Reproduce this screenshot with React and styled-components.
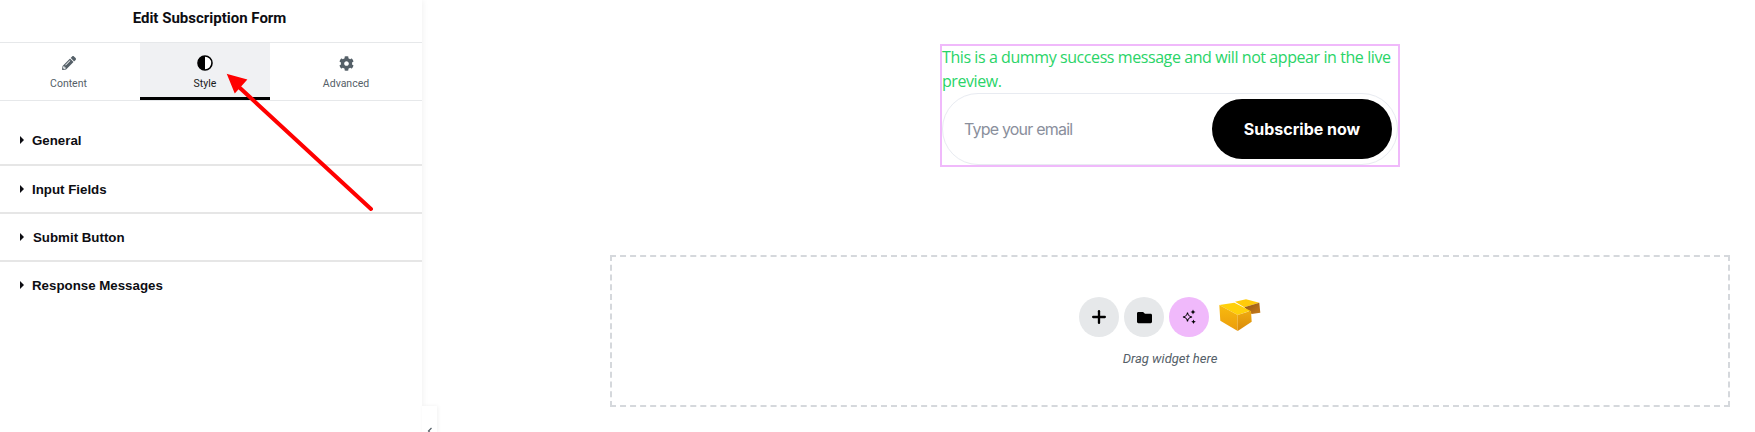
import React from "react"
import styled, { createGlobalStyle } from "styled-components"
import { FaPencilAlt, FaCog, FaFolder } from "react-icons/fa"
import { Plus } from "lucide-react"

const GlobalStyle = createGlobalStyle`
  html, body {
    margin: 0;
    padding: 0;
    background: #fff;
    overflow: hidden;
  }
  * {
    box-sizing: border-box;
  }
`

const sections = [
  { label: "General", height: 65, top: 32 },
  { label: "Input Fields", height: 48 },
  { label: "Submit Button", height: 48, gap: 9 },
  { label: "Response Messages", height: 48, last: true },
]

const ContrastIcon = () => (
  <svg width="16" height="16" viewBox="0 0 16 16">
    <circle cx="8" cy="8" r="7" fill="#fff" stroke="#000" strokeWidth="1.6" />
    <path d="M8 1 A7 7 0 0 0 8 15 Z" fill="#000" />
  </svg>
)

const Sparkles = () => (
  <svg width="16" height="16" viewBox="0 0 16 16" fill="none">
    <path
      d="M6.5 3.5 C7 6.5 7.8 7.4 11 8 C7.8 8.6 7 9.5 6.5 12.5 C6 9.5 5.2 8.6 2 8 C5.2 7.4 6 6.5 6.5 3.5 Z"
      stroke="#000"
      strokeWidth="1.1"
    />
    <path d="M12 0.5 L12.8 2.2 L14.5 3 L12.8 3.8 L12 5.5 L11.2 3.8 L9.5 3 L11.2 2.2 Z" fill="#000" />
    <path d="M12.5 10.5 L13.2 12.1 L14.8 12.8 L13.2 13.5 L12.5 15.1 L11.8 13.5 L10.2 12.8 L11.8 12.1 Z" fill="#000" />
  </svg>
)

const BlocksLogo = () => (
  <svg width="42" height="34" viewBox="0 0 42 34">
    <defs>
      <linearGradient id="blockFront" x1="0" y1="0" x2="0" y2="1">
        <stop offset="0" stopColor="#f8bb0e" />
        <stop offset="1" stopColor="#eb9c0c" />
      </linearGradient>
      <linearGradient id="blockSide" x1="0" y1="0" x2="0" y2="1">
        <stop offset="0" stopColor="#efab10" />
        <stop offset="1" stopColor="#d98a0b" />
      </linearGradient>
      <linearGradient id="blockBrown" x1="0" y1="0" x2="1" y2="1">
        <stop offset="0" stopColor="#8f5514" />
        <stop offset="1" stopColor="#c97c1a" />
      </linearGradient>
    </defs>
    <path d="M16 3.7 L27 1.3 L40.3 4.7 L25.3 9.3 Z" fill="#ffcb0a" />
    <path d="M25.3 9.3 L40.3 4.7 L41.3 14.7 L32.7 16 Z" fill="url(#blockBrown)" />
    <path d="M0.3 7 L15.3 4.7 L31.3 12.7 L18.7 17 Z" fill="#ffd00a" />
    <path d="M0.3 7 L18.7 17 L18.7 33 L1.3 22.7 Z" fill="url(#blockFront)" />
    <path d="M18.7 17 L32 12.7 L32.7 23.7 L18.7 33 Z" fill="url(#blockSide)" />
  </svg>
)

const App = () => {
  return (
    <Page>
      <GlobalStyle />
      <Sidebar>
        <Title>Edit Subscription Form</Title>
        <Tabs>
          <Tab $width={140} $shift={3}>
            <TabIcon>
              <FaPencilAlt size={14} color="#556068" />
            </TabIcon>
            <TabLabel>Content</TabLabel>
          </Tab>
          <Tab $width={130} $active>
            <TabIcon>
              <ContrastIcon />
            </TabIcon>
            <TabLabel $active>Style</TabLabel>
          </Tab>
          <Tab $width={152}>
            <TabIcon>
              <FaCog size={15} color="#556068" />
            </TabIcon>
            <TabLabel>Advanced</TabLabel>
          </Tab>
        </Tabs>
        {sections.map((section) => (
          <Section
            key={section.label}
            $height={section.height}
            $top={section.top}
            $gap={section.gap}
            $last={section.last}
          >
            <Caret />
            <SectionName>{section.label}</SectionName>
          </Section>
        ))}
      </Sidebar>
      <CollapseTab>
        <svg width="6" height="8" viewBox="0 0 6 8" fill="none">
          <path d="M4.5 1 L1.5 4 L4.5 7" stroke="#556068" strokeWidth="1.2" />
        </svg>
      </CollapseTab>
      <Canvas>
        <FormBox>
          <Success>This is a dummy success message and will not appear in the live preview.</Success>
          <SubscribeRow>
            <EmailPlaceholder>Type your email</EmailPlaceholder>
            <SubscribeButton>Subscribe now</SubscribeButton>
          </SubscribeRow>
        </FormBox>
        <DropZone>
          <DropActions>
            <RoundButton>
              <Plus size={20} strokeWidth={2.8} color="#000" />
            </RoundButton>
            <RoundButton>
              <FaFolder size={15} color="#000" />
            </RoundButton>
            <RoundButton $pink>
              <Sparkles />
            </RoundButton>
            <LogoSlot>
              <BlocksLogo />
            </LogoSlot>
          </DropActions>
          <DropHint>Drag widget here</DropHint>
        </DropZone>
      </Canvas>
      <ArrowOverlay width="422" height="220" viewBox="0 0 422 220">
        <path d="M371 209 L240 88" stroke="#ff0000" strokeWidth="4" strokeLinecap="round" />
        <path d="M228 75 L246 80 L235 92 Z" fill="#ff0000" stroke="#ff0000" strokeWidth="1.5" />
      </ArrowOverlay>
    </Page>
  )
}

const Page = styled.div`
  position: relative;
  display: flex;
  width: 1755px;
  height: 432px;
  overflow: hidden;
  background: #fff;
`

const Sidebar = styled.aside`
  flex: 0 0 422px;
  height: 432px;
  background: #fff;
  box-shadow: 1px 0 6px rgba(0, 0, 0, 0.06);
  font-family: "Liberation Sans", Arial, sans-serif;
`

const Title = styled.h1`
  margin: 0;
  height: 43px;
  padding: 8px 3px 0 0;
  text-align: center;
  font-family: Roboto, sans-serif;
  font-size: 15px;
  line-height: 20px;
  font-weight: 700;
  color: #0d0d12;
  border-bottom: 1px solid #e6e8ea;
`

const Tabs = styled.div`
  display: flex;
  height: 58px;
  border-bottom: 1px solid #e6e8ea;
`

const Tab = styled.div`
  flex: 0 0 ${(props) => props.$width}px;
  display: flex;
  flex-direction: column;
  align-items: center;
  padding: 12px ${(props) => props.$shift || 0}px 0 0;
  gap: 6px;
  height: 57px;
  background: ${(props) => (props.$active ? "#f0f1f3" : "transparent")};
  border-bottom: 3px solid ${(props) => (props.$active ? "#000" : "transparent")};
`

const TabIcon = styled.span`
  display: flex;
  align-items: center;
  justify-content: center;
  height: 16px;
`

const TabLabel = styled.span`
  font-family: Roboto, sans-serif;
  font-size: 10.5px;
  line-height: 14px;
  color: ${(props) => (props.$active ? "#1a1a1a" : "#556068")};
`

const Section = styled.div`
  display: flex;
  align-items: flex-start;
  gap: ${(props) => props.$gap || 8}px;
  height: ${(props) => props.$height}px;
  padding: ${(props) => props.$top || 16}px 0 0 20px;
  border-bottom: ${(props) => (props.$last ? "none" : "2px solid #e6e6e6")};
`

const Caret = styled.span`
  width: 0;
  height: 0;
  margin-top: 3px;
  border-left: 4px solid #0d0d12;
  border-top: 4px solid transparent;
  border-bottom: 4px solid transparent;
`

const SectionName = styled.span`
  font-size: 13.3px;
  line-height: 16px;
  font-weight: 700;
  color: #0d0d12;
`

const CollapseTab = styled.div`
  position: absolute;
  left: 422px;
  top: 406px;
  width: 15px;
  height: 26px;
  display: flex;
  align-items: flex-end;
  justify-content: center;
  background: #fff;
  box-shadow: 1px 0 4px rgba(0, 0, 0, 0.06);

  svg {
    margin-bottom: -3px;
  }
`

const Canvas = styled.main`
  flex: 1;
  display: flex;
  flex-direction: column;
  align-items: center;
  padding: 44px 25px 0 188px;
`

const FormBox = styled.div`
  width: 460px;
  height: 123px;
  border: 2px solid #f0b9fb;
`

const Success = styled.p`
  margin: -1px 0 0;
  font-family: "Open Sans", sans-serif;
  font-size: 16px;
  letter-spacing: -0.42px;
  line-height: 24px;
  color: #2ad468;
`

const SubscribeRow = styled.div`
  display: flex;
  align-items: center;
  justify-content: space-between;
  height: 72px;
  padding: 0 5px 0 21px;
  border: 1px solid #e8ebf1;
  border-radius: 36px;
`

const EmailPlaceholder = styled.span`
  font-family: Inter, sans-serif;
  font-size: 16px;
  letter-spacing: -0.8px;
  color: #8a8f9c;
`

const SubscribeButton = styled.button`
  width: 180px;
  height: 60px;
  border: none;
  border-radius: 30px;
  background: #000;
  color: #fff;
  font-family: Inter, sans-serif;
  font-size: 16px;
  font-weight: 700;
`

const DropZone = styled.section`
  width: 100%;
  height: 152px;
  margin-top: 88px;
  display: flex;
  flex-direction: column;
  align-items: center;
  padding-top: 40px;
  border: 2px dashed #d5d8dc;
`

const DropActions = styled.div`
  display: flex;
  align-items: center;
  gap: 5px;
`

const RoundButton = styled.div`
  width: 40px;
  height: 40px;
  border-radius: 50%;
  display: flex;
  align-items: center;
  justify-content: center;
  background: ${(props) => (props.$pink ? "#f0b9fb" : "#e6e8ea")};
`

const LogoSlot = styled.div`
  display: flex;
  margin-left: 5px;
  margin-top: -4px;
`

const DropHint = styled.div`
  margin-top: 14px;
  font-family: Roboto, sans-serif;
  font-size: 13px;
  line-height: 16px;
  font-style: italic;
  color: #556068;
`

const ArrowOverlay = styled.svg`
  position: absolute;
  left: 0;
  top: 0;
  pointer-events: none;
`

export default App
